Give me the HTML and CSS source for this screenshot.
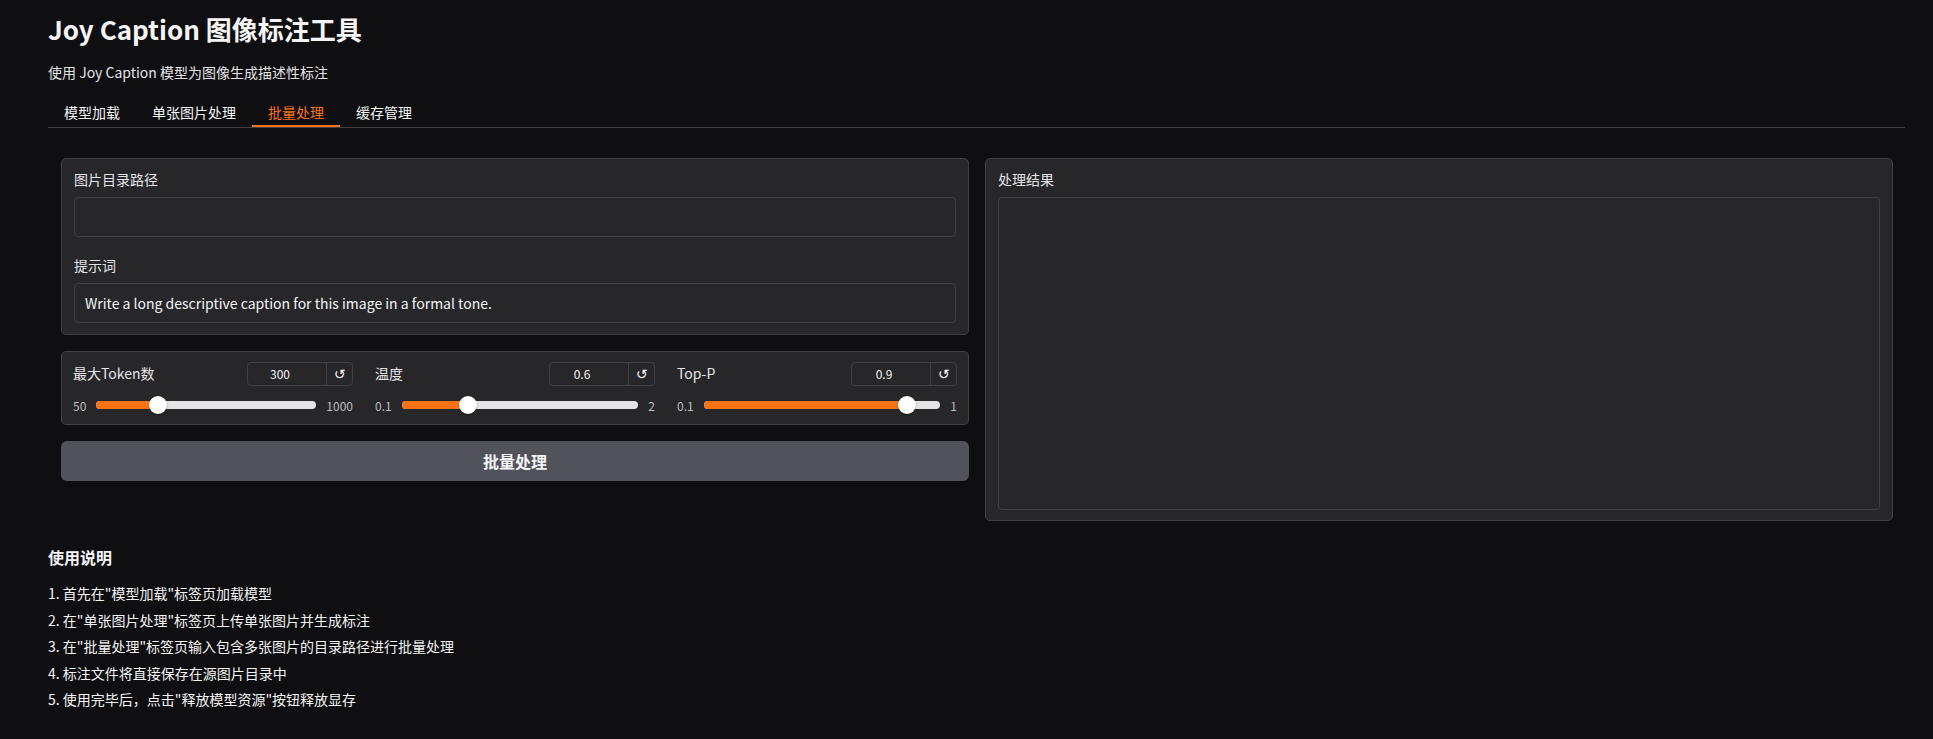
FILE: index.html
```html
<html>
	<head>
		<meta charset="utf-8" />
		<title>Joy Caption 图像标注工具</title>
		<meta name="viewport" content="width=device-width, initial-scale=1.0" />
		<link rel="stylesheet" href="styles.css">
	</head>

	<body>
		<div class="app">
			<h1 class="title">Joy Caption 图像标注工具</h1>
			<p class="subtitle">使用 Joy Caption 模型为图像生成描述性标注</p>

			<div class="tabs">
				<div class="tab">模型加载</div>
				<div class="tab">单张图片处理</div>
				<div class="tab active">批量处理</div>
				<div class="tab">缓存管理</div>
			</div>

			<div class="tab_body">
				<div class="col">
					<div class="block form">
						<div class="label">图片目录路径</div>
						<div class="input"></div>
						<div class="label label_next">提示词</div>
						<div class="input">Write a long descriptive caption for this image in a formal tone.</div>
					</div>

					<div class="block sliders">
						<div class="slider">
							<div class="slider_head">
								<span class="label">最大Token数</span>
								<div class="num"><span class="num_val">300</span><span class="num_reset">↺</span></div>
							</div>
							<div class="slider_row">
								<span class="range_txt">50</span>
								<div class="track" style="--p:0.263"><div class="fill"></div><div class="thumb"></div></div>
								<span class="range_txt">1000</span>
							</div>
						</div>
						<div class="slider">
							<div class="slider_head">
								<span class="label">温度</span>
								<div class="num"><span class="num_val">0.6</span><span class="num_reset">↺</span></div>
							</div>
							<div class="slider_row">
								<span class="range_txt">0.1</span>
								<div class="track" style="--p:0.263"><div class="fill"></div><div class="thumb"></div></div>
								<span class="range_txt">2</span>
							</div>
						</div>
						<div class="slider">
							<div class="slider_head">
								<span class="label">Top-P</span>
								<div class="num"><span class="num_val">0.9</span><span class="num_reset">↺</span></div>
							</div>
							<div class="slider_row">
								<span class="range_txt">0.1</span>
								<div class="track" style="--p:0.889"><div class="fill"></div><div class="thumb"></div></div>
								<span class="range_txt">1</span>
							</div>
						</div>
					</div>

					<div class="btn">批量处理</div>
				</div>

				<div class="col">
					<div class="block result">
						<div class="label">处理结果</div>
						<div class="textarea"></div>
					</div>
				</div>
			</div>

			<div class="help">
				<h3 class="help_title">使用说明</h3>
				<div class="help_list">
					<div>1. 首先在"模型加载"标签页加载模型</div>
					<div>2. 在"单张图片处理"标签页上传单张图片并生成标注</div>
					<div>3. 在"批量处理"标签页输入包含多张图片的目录路径进行批量处理</div>
					<div>4. 标注文件将直接保存在源图片目录中</div>
					<div>5. 使用完毕后，点击"释放模型资源"按钮释放显存</div>
				</div>
			</div>
		</div>
	</body>
</html>
```

FILE: styles.css
```css
	* {margin: 0; padding: 0; box-sizing: border-box;}
	body {background: #0f0f11; color: #f4f4f5; font-family: "Noto Sans CJK SC", "Source Sans Pro", sans-serif; font-size: 14px;}
/*header*/
	.app {padding: 0 28px 0 48px;}
	.title {font-size: 26px; line-height: 36px; padding-top: 11px; font-weight: bold; color: #f4f4f5;}
	.subtitle {margin-top: 15px; line-height: 20px; color: #e4e4e7;}
/*tabs*/
	.tabs {display: flex; margin-top: 14px; border-bottom: 1px solid #3f3f46;}
	.tab {padding: 6px 16px 3px; line-height: 20px; border-bottom: 2px solid transparent; color: #f4f4f5;}
	.tab.active {color: #f97316; border-bottom-color: #f97316;}
	.tab_body {display: flex; gap: 16px; align-items: flex-start; padding: 30px 12px 0 13px;}
	.col {flex: 1; display: flex; flex-direction: column; gap: 16px;}
/*blocks*/
	.block {background: #27272a; border: 1px solid #3f3f46; border-radius: 5px;}
	.label {display: block; line-height: 20px; margin-bottom: 8px; color: #e4e4e7;}
	.form {padding: 10px 12px 11px;}
	.label_next {margin-top: 18px;}
	.input {height: 40px; border: 1px solid #3f3f46; border-radius: 4px; padding: 0 10px; line-height: 38px; color: #f4f4f5;}
	.result {padding: 10px 12px;}
	.textarea {height: 313px; border: 1px solid #3f3f46; border-radius: 4px;}
/*sliders*/
	.sliders {display: flex;}
	.slider {flex: 1; padding: 10px 11px 10px 11px;}
	.slider_head {display: flex; justify-content: space-between; align-items: flex-start; height: 24px;}
	.slider_head .label {margin: 1px 0 0;}
	.num {display: flex; width: 106px; height: 24px; border: 1px solid #3f3f46; border-radius: 4px; font-size: 12px; line-height: 22px;}
	.num_val {flex: 1; text-align: center; padding-right: 14px;}
	.num_reset {width: 26px; border-left: 1px solid #3f3f46; text-align: center; font-family: "DejaVu Sans", sans-serif; font-size: 14px;}
	.slider_row {display: flex; align-items: center; gap: 10px; height: 18px; margin-top: 10px;}
	.range_txt {font-size: 12px; color: #bbbbc2;}
	.track {flex: 1; height: 8px; border-radius: 4px; background: #e4e4e7; position: relative;}
	.fill {height: 8px; border-radius: 4px; background: #f97316; width: calc(9px + var(--p) * (100% - 18px));}
	.thumb {position: absolute; top: -5px; left: calc(var(--p) * (100% - 18px)); width: 18px; height: 18px; border-radius: 50%; background: #fff; box-shadow: 0 1px 2px rgba(0,0,0,0.35);}
/*button*/
	.btn {height: 40px; background: #52525b; border-radius: 6px; text-align: center; line-height: 40px; font-size: 16px; font-weight: bold; color: #f4f4f5;}
/*help*/
	.help {margin-top: 24px;}
	.help_title {font-size: 16px; line-height: 24px; font-weight: bold;}
	.help_list {margin-top: 11px; line-height: 26.5px;}
```
